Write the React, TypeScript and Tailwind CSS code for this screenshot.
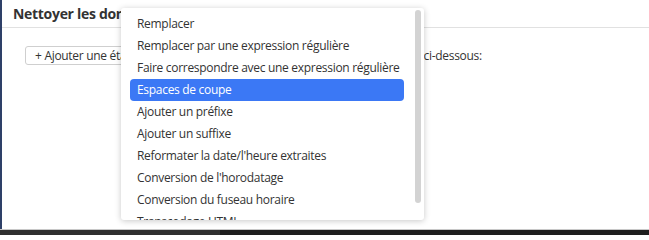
import { useState } from "react";

const options = [
  "Remplacer",
  "Remplacer par une expression régulière",
  "Faire correspondre avec une expression régulière",
  "Espaces de coupe",
  "Ajouter un préfixe",
  "Ajouter un suffixe",
  "Reformater la date/l'heure extraites",
  "Conversion de l'horodatage",
  "Conversion du fuseau horaire",
  "Transcodage HTML",
];

export default function App() {
  const [active, setActive] = useState(3);

  return (
    <div
      className="relative w-[649px] h-[235px] overflow-hidden bg-white text-[#333] tracking-[-0.3px]"
      style={{ fontFamily: "'Open Sans', 'Noto Sans', sans-serif" }}
    >
      <div className="flex h-[229px]">
        <div className="w-[2px] bg-[#2e4068]" />
        <div className="flex-1 flex flex-col">
          {/* Header */}
          <div className="h-[28px] border-b border-[#e1e1e1] flex items-center pl-[11px]">
            <h1 className="text-[14px] font-bold leading-none">
              Nettoyer les données extraites ?
            </h1>
          </div>

          {/* Body */}
          <div className="flex items-center pl-[23px] pt-[18px]">
            <button className="h-[19px] px-[9px] border border-[#cfcfcf] rounded-[3px] text-[12px] leading-none bg-white">
              + Ajouter une étape
            </button>
            <span className="ml-[50px] text-[12px]">
              Les étapes seront appliquées dans l'ordre ci-dessous:
            </span>
          </div>
        </div>
      </div>

      {/* Footer strip */}
      <div className="flex h-[6px] border-t border-[#c8c8c8]">
        <div className="w-[220px] bg-[#2f2f2f]" />
        <div className="flex-1 bg-[#1e1e1e]" />
      </div>

      {/* Dropdown menu */}
      <div className="absolute left-[121px] top-[8px] w-[303px] h-[212px] bg-white rounded-[3px] shadow-[0_1px_6px_rgba(0,0,0,0.22)] overflow-hidden">
        <ul className="pt-[5px] pl-[9px] pr-[20px]">
          {options.map((o, i) => (
            <li
              key={o}
              onMouseEnter={() => setActive(i)}
              className={`h-[22px] flex items-center pl-[7px] rounded-[4px] text-[12px] whitespace-nowrap cursor-pointer ${
                i === active ? "bg-[#3b78f5] text-white" : "text-[#333]"
              }`}
            >
              {o}
            </li>
          ))}
        </ul>
        <div className="absolute right-[3px] top-[2px] w-[6px] h-[193px] rounded-full bg-[#d3d3d3]" />
      </div>
    </div>
  );
}
